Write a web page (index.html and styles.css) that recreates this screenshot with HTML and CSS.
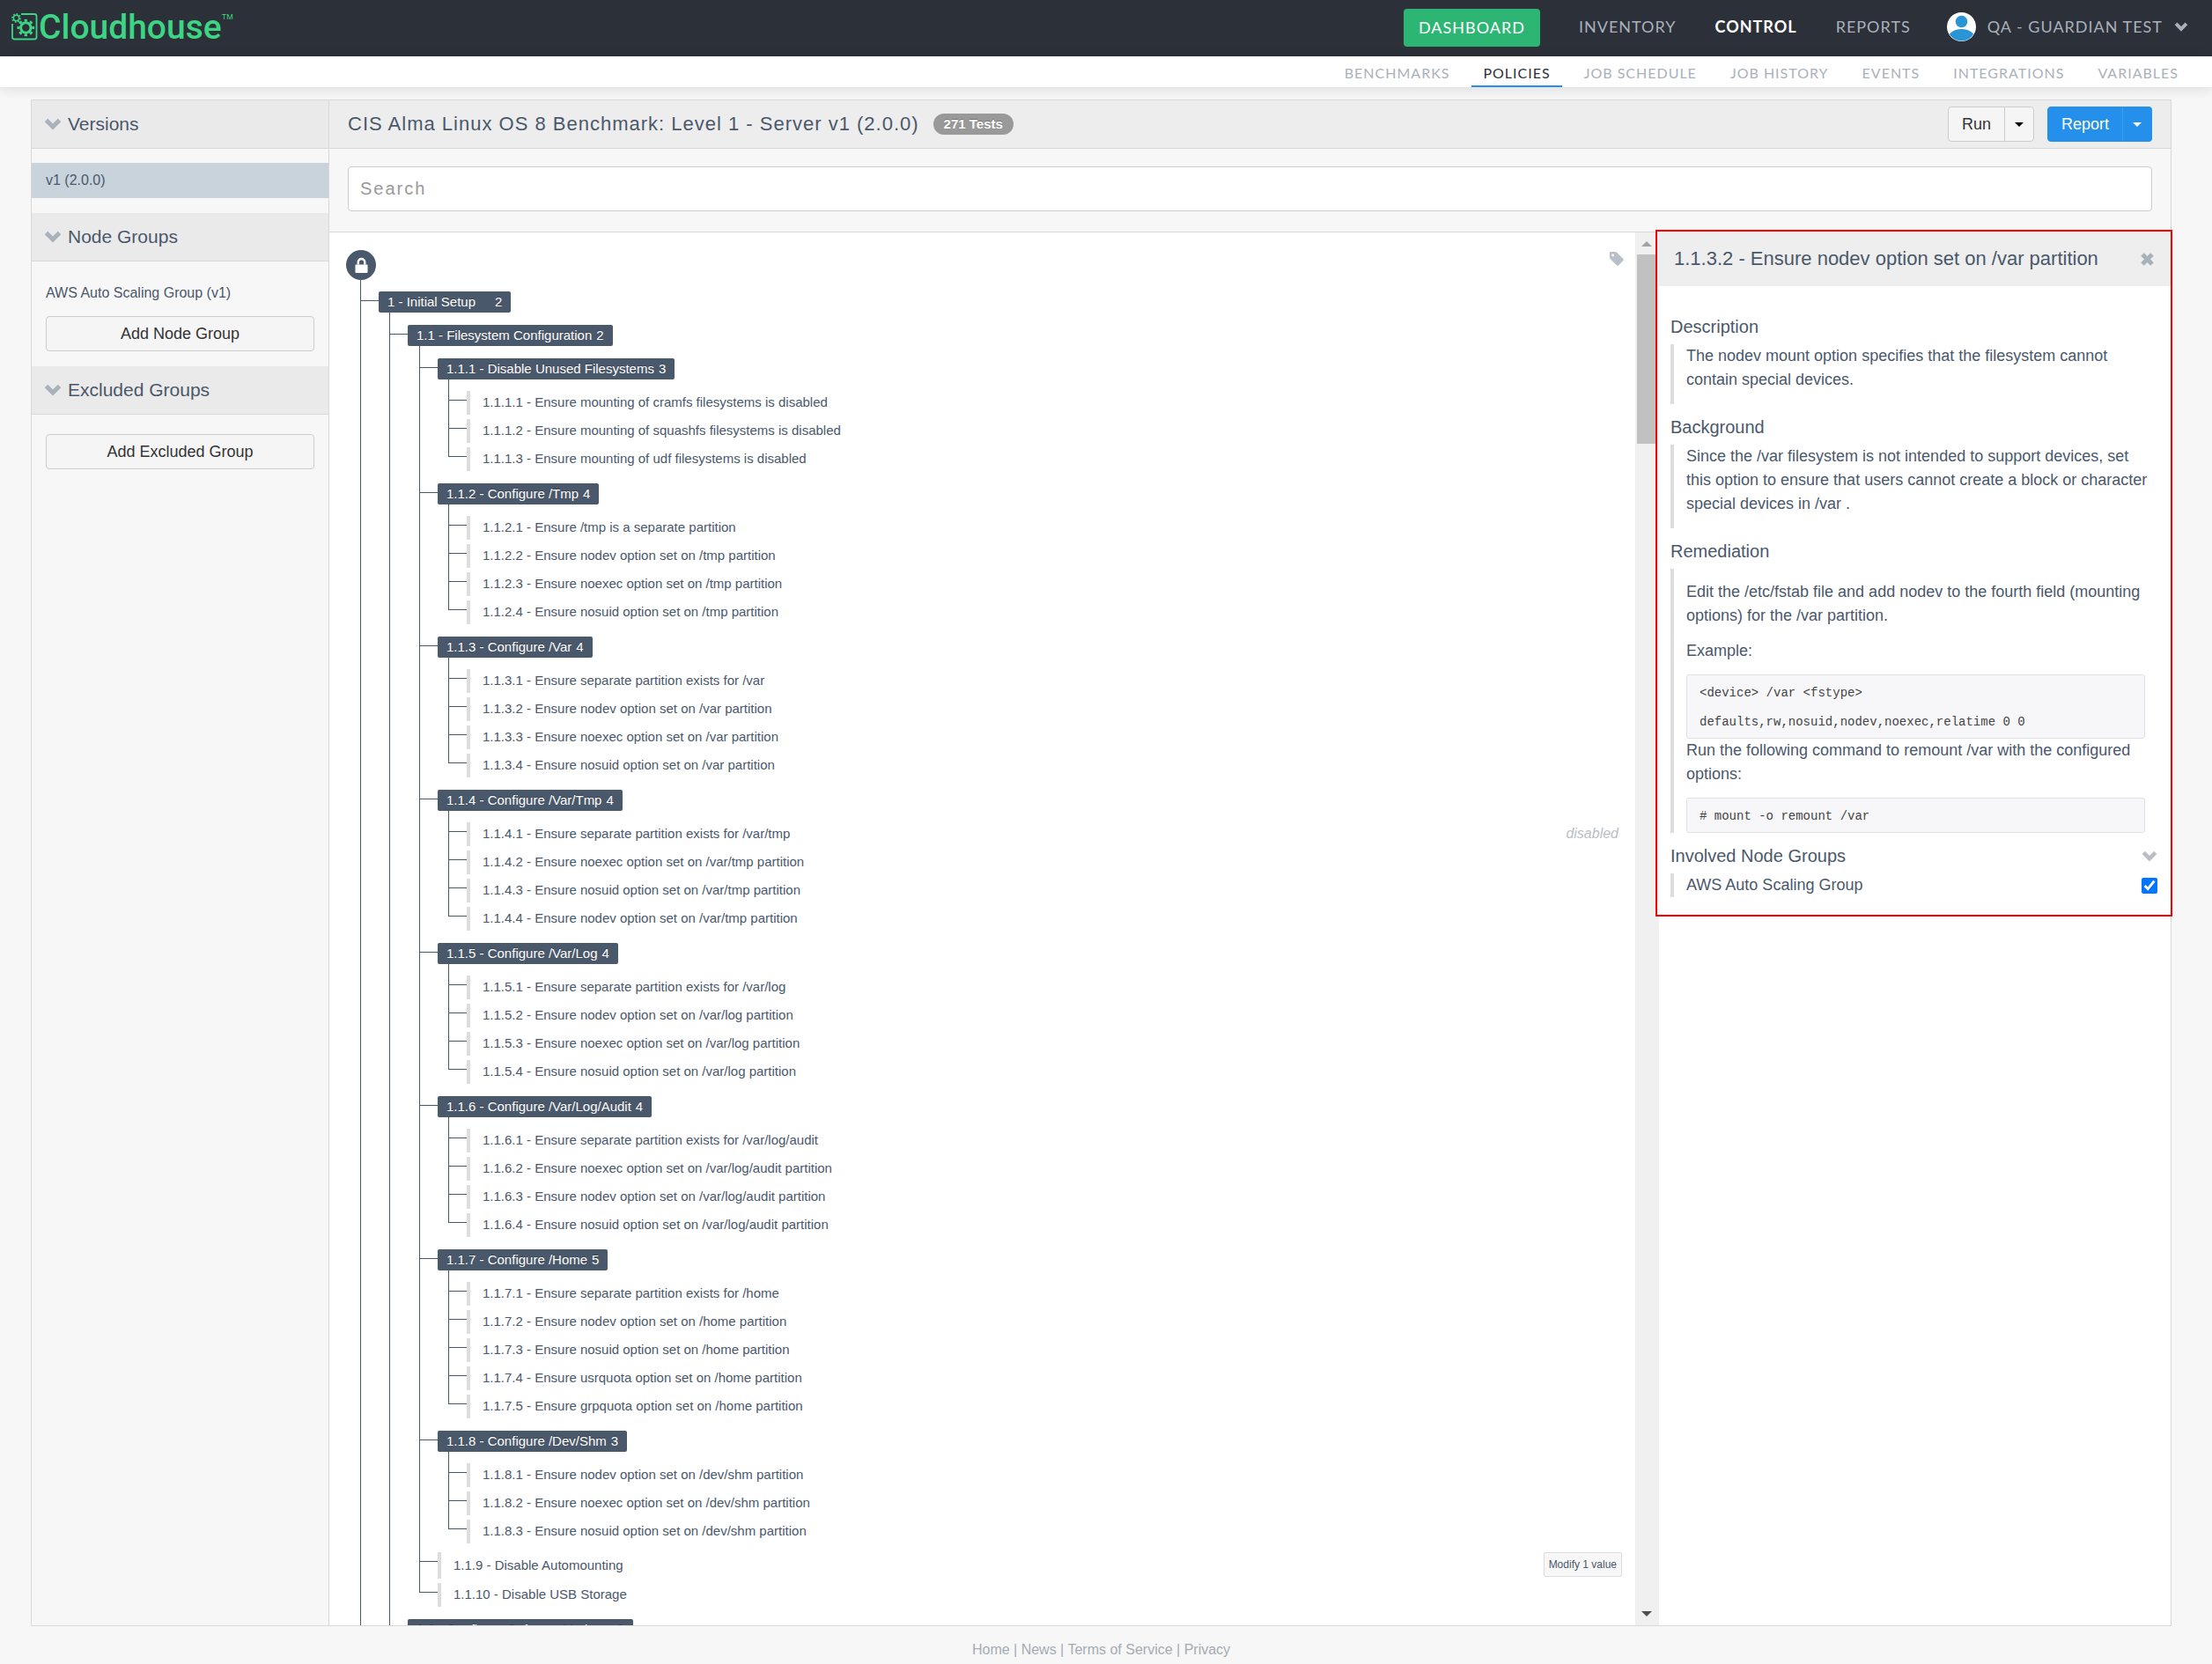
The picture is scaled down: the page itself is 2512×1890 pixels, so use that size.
FILE: index.html
```html
<!DOCTYPE html>
<html lang="en">
<head>
<meta charset="utf-8">
<title>Cloudhouse - Policies</title>
<meta name="viewport" content="width=device-width, initial-scale=1">
<link rel="stylesheet" href="styles.css">
</head>
<body>
<svg class="sprite" aria-hidden="true">
  <symbol id="chevron" viewBox="0 0 20 14"><path d="M2.5 2.5 10 10l7.500-7.500" fill="none" stroke="currentColor" stroke-width="5"/></symbol>
</svg>

<header class="topbar">
  <a class="logo" href="#">
    <svg class="logo-mark" viewBox="0 0 32 32" aria-hidden="true">
      <path d="M12 2h15a2.500 2.500 0 0 1 2.500 2.500v23.500a2.500 2.500 0 0 1-2.500 2.500H4.500a2.500 2.500 0 0 1-2.500-2.500V13" fill="none" stroke="currentColor" stroke-width="1.800"/>
      <circle cx="6.500" cy="6.500" r="3.200" fill="none" stroke="currentColor" stroke-width="1.500"/>
      <circle cx="6.500" cy="6.500" r="4.600" fill="none" stroke="currentColor" stroke-width="1.600" pathLength="16" stroke-dasharray="1 1"/>
      <circle cx="17.300" cy="17.500" r="5.700" fill="none" stroke="currentColor" stroke-width="3"/>
      <circle cx="17.300" cy="17.500" r="8.300" fill="none" stroke="currentColor" stroke-width="3" pathLength="16" stroke-dasharray="1 1" stroke-dashoffset="0.500"/>
    </svg>
    <span class="logo-name">Cloudhouse</span><span class="logo-tm">TM</span>
  </a>
  <nav class="mainnav">
    <a class="dashboard" href="#">DASHBOARD</a>
    <a href="#">INVENTORY</a>
    <a class="current" href="#">CONTROL</a>
    <a href="#">REPORTS</a>
    <button class="account" type="button">
      <svg class="avatar" viewBox="0 0 33 33" aria-hidden="true">
        <defs><clipPath id="disc"><circle cx="16.500" cy="16.500" r="16"/></clipPath></defs>
        <circle cx="16.500" cy="16.500" r="16.500" fill="#fff"/>
        <circle cx="16.500" cy="10.500" r="6.800" fill="#2a95d5"/>
        <ellipse cx="16.500" cy="30" rx="15.500" ry="11" fill="#2a95d5" clip-path="url(#disc)"/>
      </svg>
      <span>QA - GUARDIAN TEST</span>
      <svg class="account-arrow" aria-hidden="true"><use href="#chevron"/></svg>
    </button>
  </nav>
</header>
<nav class="subnav">
  <a href="#">BENCHMARKS</a>
  <a class="current" href="#">POLICIES</a>
  <a href="#">JOB SCHEDULE</a>
  <a href="#">JOB HISTORY</a>
  <a href="#">EVENTS</a>
  <a href="#">INTEGRATIONS</a>
  <a href="#">VARIABLES</a>
</nav>

<main class="frame">
  <aside class="sidebar">
    <h2><svg class="fold" aria-hidden="true"><use href="#chevron"/></svg>Versions</h2>
    <div class="side-body">
      <a class="side-item selected" href="#">v1 (2.0.0)</a>
    </div>
    <h2><svg class="fold" aria-hidden="true"><use href="#chevron"/></svg>Node Groups</h2>
    <div class="side-body">
      <a class="side-item" href="#">AWS Auto Scaling Group (v1)</a>
      <button class="btn side-btn" type="button">Add Node Group</button>
    </div>
    <h2><svg class="fold" aria-hidden="true"><use href="#chevron"/></svg>Excluded Groups</h2>
    <div class="side-body">
      <button class="btn side-btn" type="button">Add Excluded Group</button>
    </div>
  </aside>

  <section class="policy">
    <div class="policy-head">
      <h1>CIS Alma Linux OS 8 Benchmark: Level 1 - Server v1 (2.0.0)</h1>
      <span class="badge">271 Tests</span>
      <div class="split">
        <button class="btn" type="button">Run</button>
        <button class="btn caret" type="button" aria-label="Run options"></button>
      </div>
      <div class="split primary">
        <button class="btn" type="button">Report</button>
        <button class="btn caret" type="button" aria-label="Report options"></button>
      </div>
    </div>
    <form class="search">
      <input type="text" placeholder="Search" aria-label="Search">
    </form>

    <div class="work">
      <div class="tree-pane">
        <div class="tree-top">
          <span class="lock">
            <svg viewBox="0 0 16 20" aria-hidden="true"><path d="M4 9V6a4 4 0 0 1 8 0v3" fill="none" stroke="#fff" stroke-width="2.600"/><rect x="0.500" y="9" width="15" height="10" rx="1" fill="#fff"/></svg>
          </span>
          <svg class="tag" viewBox="0 0 16 16" aria-hidden="true"><path fill-rule="evenodd" d="M1 0h5.500a2 2 0 0 1 1.400.6l7.500 7.400a1.200 1.200 0 0 1 0 1.700L10 15.500a1.200 1.200 0 0 1-1.700 0L.6 8A2 2 0 0 1 0 6.600V1a1 1 0 0 1 1-1zm2.700 2.200a1.500 1.500 0 1 0 0 3 1.500 1.500 0 0 0 0-3z" fill="currentColor"/></svg>
        </div>
        <ul class="tree">
          <li class="branch">
            <span class="node"><span class="node-name">1 - Initial Setup</span>2</span>
            <ul>
              <li class="branch">
                <span class="node"><span class="node-name">1.1 - Filesystem Configuration</span>2</span>
                <ul>
                  <li class="branch">
                    <span class="node"><span class="node-name">1.1.1 - Disable Unused Filesystems</span>3</span>
                    <ul>
                      <li class="leaf"><div class="test">1.1.1.1 - Ensure mounting of cramfs filesystems is disabled</div></li>
                      <li class="leaf"><div class="test">1.1.1.2 - Ensure mounting of squashfs filesystems is disabled</div></li>
                      <li class="leaf"><div class="test">1.1.1.3 - Ensure mounting of udf filesystems is disabled</div></li>
                    </ul>
                  </li>
                  <li class="branch">
                    <span class="node"><span class="node-name">1.1.2 - Configure /Tmp</span>4</span>
                    <ul>
                      <li class="leaf"><div class="test">1.1.2.1 - Ensure /tmp is a separate partition</div></li>
                      <li class="leaf"><div class="test">1.1.2.2 - Ensure nodev option set on /tmp partition</div></li>
                      <li class="leaf"><div class="test">1.1.2.3 - Ensure noexec option set on /tmp partition</div></li>
                      <li class="leaf"><div class="test">1.1.2.4 - Ensure nosuid option set on /tmp partition</div></li>
                    </ul>
                  </li>
                  <li class="branch">
                    <span class="node"><span class="node-name">1.1.3 - Configure /Var</span>4</span>
                    <ul>
                      <li class="leaf"><div class="test">1.1.3.1 - Ensure separate partition exists for /var</div></li>
                      <li class="leaf"><div class="test">1.1.3.2 - Ensure nodev option set on /var partition</div></li>
                      <li class="leaf"><div class="test">1.1.3.3 - Ensure noexec option set on /var partition</div></li>
                      <li class="leaf"><div class="test">1.1.3.4 - Ensure nosuid option set on /var partition</div></li>
                    </ul>
                  </li>
                  <li class="branch">
                    <span class="node"><span class="node-name">1.1.4 - Configure /Var/Tmp</span>4</span>
                    <ul>
                      <li class="leaf"><div class="test">1.1.4.1 - Ensure separate partition exists for /var/tmp <em class="state">disabled</em></div></li>
                      <li class="leaf"><div class="test">1.1.4.2 - Ensure noexec option set on /var/tmp partition</div></li>
                      <li class="leaf"><div class="test">1.1.4.3 - Ensure nosuid option set on /var/tmp partition</div></li>
                      <li class="leaf"><div class="test">1.1.4.4 - Ensure nodev option set on /var/tmp partition</div></li>
                    </ul>
                  </li>
                  <li class="branch">
                    <span class="node"><span class="node-name">1.1.5 - Configure /Var/Log</span>4</span>
                    <ul>
                      <li class="leaf"><div class="test">1.1.5.1 - Ensure separate partition exists for /var/log</div></li>
                      <li class="leaf"><div class="test">1.1.5.2 - Ensure nodev option set on /var/log partition</div></li>
                      <li class="leaf"><div class="test">1.1.5.3 - Ensure noexec option set on /var/log partition</div></li>
                      <li class="leaf"><div class="test">1.1.5.4 - Ensure nosuid option set on /var/log partition</div></li>
                    </ul>
                  </li>
                  <li class="branch">
                    <span class="node"><span class="node-name">1.1.6 - Configure /Var/Log/Audit</span>4</span>
                    <ul>
                      <li class="leaf"><div class="test">1.1.6.1 - Ensure separate partition exists for /var/log/audit</div></li>
                      <li class="leaf"><div class="test">1.1.6.2 - Ensure noexec option set on /var/log/audit partition</div></li>
                      <li class="leaf"><div class="test">1.1.6.3 - Ensure nodev option set on /var/log/audit partition</div></li>
                      <li class="leaf"><div class="test">1.1.6.4 - Ensure nosuid option set on /var/log/audit partition</div></li>
                    </ul>
                  </li>
                  <li class="branch">
                    <span class="node"><span class="node-name">1.1.7 - Configure /Home</span>5</span>
                    <ul>
                      <li class="leaf"><div class="test">1.1.7.1 - Ensure separate partition exists for /home</div></li>
                      <li class="leaf"><div class="test">1.1.7.2 - Ensure nodev option set on /home partition</div></li>
                      <li class="leaf"><div class="test">1.1.7.3 - Ensure nosuid option set on /home partition</div></li>
                      <li class="leaf"><div class="test">1.1.7.4 - Ensure usrquota option set on /home partition</div></li>
                      <li class="leaf"><div class="test">1.1.7.5 - Ensure grpquota option set on /home partition</div></li>
                    </ul>
                  </li>
                  <li class="branch">
                    <span class="node"><span class="node-name">1.1.8 - Configure /Dev/Shm</span>3</span>
                    <ul>
                      <li class="leaf"><div class="test">1.1.8.1 - Ensure nodev option set on /dev/shm partition</div></li>
                      <li class="leaf"><div class="test">1.1.8.2 - Ensure noexec option set on /dev/shm partition</div></li>
                      <li class="leaf"><div class="test">1.1.8.3 - Ensure nosuid option set on /dev/shm partition</div></li>
                    </ul>
                  </li>
                  <li class="leaf"><div class="test">1.1.9 - Disable Automounting <button class="modify" type="button">Modify 1 value</button></div></li>
                  <li class="leaf"><div class="test">1.1.10 - Disable USB Storage</div></li>
                </ul>
              </li>
              <li class="branch">
                <span class="node"><span class="node-name">1.2 - Configure Software Updates</span>3</span>
              </li>
            </ul>
          </li>
        </ul>
      </div>
      <div class="scrollbar" aria-hidden="true">
        <span class="arrow up"></span>
        <span class="thumb"></span>
        <span class="arrow down"></span>
      </div>
      <div class="side-pane">
        <article class="detail">
          <header class="detail-head">
            <h2>1.1.3.2 - Ensure nodev option set on /var partition</h2>
            <button class="close" type="button" aria-label="Close">
              <svg viewBox="0 0 15 15" aria-hidden="true"><path d="M2 2l11 11M13 2 2 13" stroke="currentColor" stroke-width="5"/></svg>
            </button>
          </header>
          <div class="detail-body">
            <h3>Description</h3>
            <div class="quote padded"><p>The nodev mount option specifies that the filesystem cannot contain special devices.</p></div>
            <h3>Background</h3>
            <div class="quote padded"><p>Since the /var filesystem is not intended to support devices, set this option to ensure that users cannot create a block or character special devices in /var .</p></div>
            <h3>Remediation</h3>
            <div class="quote fix">
              <p>Edit the /etc/fstab file and add nodev to the fourth field (mounting options) for the /var partition.</p>
              <p>Example:</p>
              <pre>&lt;device&gt; /var &lt;fstype&gt;
defaults,rw,nosuid,nodev,noexec,relatime 0 0</pre>
              <p>Run the following command to remount /var with the configured options:</p>
              <pre># mount -o remount /var</pre>
            </div>
            <h3>Involved Node Groups <svg class="fold-right" aria-hidden="true"><use href="#chevron"/></svg></h3>
            <div class="quote group">
              <label for="aws-group">AWS Auto Scaling Group</label>
              <input id="aws-group" type="checkbox" checked>
            </div>
          </div>
        </article>
      </div>
    </div>
  </section>
</main>

<footer class="footer">
  <a href="#">Home</a> | <a href="#">News</a> | <a href="#">Terms of Service</a> | <a href="#">Privacy</a>
</footer>
</body>
</html>
```
FILE: styles.css
```css
* { box-sizing: border-box; }

:root {
  --ink: #4a586b;
  --muted: #a9b1bb;
  --line: #d8d8d8;
}

body {
  margin: 0;
  height: 100vh;
  display: flex;
  flex-direction: column;
  background: #f7f7f7;
  color: var(--ink);
  font-family: "Liberation Sans", Arial, sans-serif;
  font-size: 16px;
}

a { color: inherit; text-decoration: none; }
button, input { font-family: inherit; }
h1, h2, h3, p, ul, pre { margin: 0; font-weight: 400; }
ul { list-style: none; padding: 0; }
svg { display: block; flex: none; }
.sprite { position: absolute; width: 0; height: 0; }

/* Top bar */
.topbar {
  flex: none;
  height: 64px;
  display: flex;
  justify-content: space-between;
  background: #2c3038;
}
.logo {
  display: flex;
  align-items: flex-start;
  padding: 14px 0 0 12px;
  color: #3dd584;
}
.logo-mark { width: 32px; height: 32px; }
.logo-name {
  font-family: Roboto, sans-serif;
  font-weight: 500;
  font-size: 39px;
  line-height: 34px;
}
.logo-tm { font-size: 9px; line-height: 10px; }

.mainnav {
  display: flex;
  align-items: center;
  gap: 44px;
  padding: 0 27px 4px 0;
  color: var(--muted);
  font-family: Lato, sans-serif;
  font-size: 18px;
  letter-spacing: 1px;
}
.mainnav .current { color: #fff; font-weight: 700; }
.dashboard {
  margin-top: 3px;
  padding: 0 17px;
  line-height: 43px;
  border-radius: 4px;
  background: #2db673;
  color: #fff;
}
.account {
  display: flex;
  align-items: center;
  gap: 13px;
  margin-left: -3px;
  padding: 0;
  border: 0;
  background: none;
  color: inherit;
  font: inherit;
  letter-spacing: inherit;
}
.avatar { width: 33px; height: 33px; }
.account-arrow { width: 16px; height: 11px; }

.subnav {
  flex: none;
  height: 35px;
  display: flex;
  justify-content: flex-end;
  gap: 12px;
  padding-right: 25px;
  background: #fff;
  box-shadow: 0 2px 14px rgba(0, 0, 0, 0.12);
  color: var(--muted);
  font-family: Lato, sans-serif;
  font-size: 16px;
  letter-spacing: 1px;
  line-height: 38px;
}
.subnav a { height: 35px; padding: 0 13px; }
.subnav .current { color: #2c3038; border-bottom: 2px solid #2590eb; }

/* Framed page */
.frame {
  flex: 1;
  min-height: 0;
  display: flex;
  margin: 14px 46px 0 35px;
  border: 1px solid var(--line);
  position: relative;
  background: #f7f7f7;
}

.sidebar {
  flex: none;
  width: 338px;
  border-right: 1px solid var(--line);
}
.sidebar h2 {
  display: flex;
  align-items: center;
  gap: 7px;
  height: 55px;
  padding-left: 14px;
  border-bottom: 1px solid var(--line);
  background: #eaeaea;
  font-size: 21px;
}
.fold { width: 20px; height: 14px; color: var(--muted); }
.side-body { padding: 16px 0 17px; }
.side-item { display: block; padding: 0 16px; line-height: 40px; }
.selected { background: #c8d3dc; }

.btn {
  height: 40px;
  padding: 0 15px;
  border: 1px solid #ccc;
  border-radius: 4px;
  background: #f5f5f5;
  color: #333;
  font-size: 18px;
}
.side-btn { display: block; width: 305px; margin: 6px 16px 0; }

.policy {
  flex: 1;
  min-width: 0;
  display: flex;
  flex-direction: column;
}
.policy-head {
  flex: none;
  display: flex;
  align-items: center;
  height: 55px;
  padding: 0 21px;
  border-bottom: 1px solid var(--line);
  background: #ededed;
}
.policy-head h1 { font-size: 22px; letter-spacing: 1px; }
.badge {
  margin: 0 auto 0 16px;
  padding: 0 12px;
  border-radius: 12px;
  background: #999;
  color: #fff;
  font-size: 15px;
  font-weight: 700;
  line-height: 24px;
  text-shadow: 0 -1px 0 rgba(0, 0, 0, 0.25);
}
.split { display: flex; margin-left: 15px; }
.split .btn:first-child { border-radius: 4px 0 0 4px; }
.split .caret {
  width: 34px;
  margin-left: -1px;
  padding: 0;
  border-radius: 0 4px 4px 0;
  display: flex;
  align-items: center;
  justify-content: center;
}
.caret::before {
  content: "";
  border: 5px solid transparent;
  border-top-color: #000;
  border-bottom: 0;
}
.primary .btn { background: #2590eb; border-color: #2590eb; color: #fff; }
.primary .caret { border-left-color: #3d9eee; }
.primary .caret::before { border-top-color: #fff; }

.search {
  flex: none;
  padding: 20px 21px 23px;
  border-bottom: 1px solid var(--line);
}
.search input {
  display: block;
  width: 100%;
  height: 51px;
  padding: 0 13px;
  border: 1px solid #ccc;
  border-radius: 4px;
  background: #fff;
  color: var(--ink);
  font-size: 20px;
  letter-spacing: 2px;
}
.search input::placeholder { color: #999; opacity: 1; }

.work {
  flex: 1;
  min-height: 0;
  display: flex;
  background: #fff;
}

/* Test tree */
.tree-pane {
  flex: 1;
  min-width: 0;
  overflow: hidden;
  padding: 20px 13px 0 19px;
}
.tree-top {
  display: flex;
  justify-content: space-between;
  align-items: flex-start;
}
.lock {
  display: flex;
  align-items: center;
  justify-content: center;
  width: 34px;
  height: 34px;
  border-radius: 50%;
  background: var(--ink);
}
.lock svg { width: 15px; height: 19px; }
.tag { width: 16px; height: 16px; margin-top: 2px; color: #b8bfc8; }

.tree { padding-left: 37px; font-size: 15px; }
.tree ul { padding-left: 33px; }
.tree ul ul { padding-left: 34px; }
.tree ul ul ul { padding-left: 33px; }
.tree li { --gap: 5px; position: relative; padding-top: var(--gap); }
.tree .branch { --gap: 14px; }
.tree > .branch { --gap: 13px; }
.tree .leaf:first-child { --gap: 13px; }
.tree .branch + .leaf { --gap: 10px; }

/* Connectors: a vertical rail and a stub to each entry */
.tree li::before {
  content: "";
  position: absolute;
  top: calc(var(--gap) + 10px);
  left: -21px;
  width: 21px;
  height: 1px;
  background: var(--ink);
}
.tree li::after {
  content: "";
  position: absolute;
  top: 0;
  bottom: 0;
  left: -21px;
  width: 1px;
  background: var(--ink);
}
.tree ul > li:last-child::after { bottom: auto; height: calc(var(--gap) + 10px); }

.node {
  display: flex;
  gap: 5px;
  width: max-content;
  padding: 0 10px;
  border-radius: 2px;
  background: var(--ink);
  color: #fff;
  line-height: 24px;
  text-shadow: 0 -1px 0 rgba(0, 0, 0, 0.25);
}
.node-name { min-width: 117px; }

.test {
  display: flex;
  align-items: center;
  justify-content: space-between;
  min-height: 27px;
  padding: 0 2px 2px 14px;
  border-left: 4px solid #ddd;
}
.state { padding-right: 4px; color: #b8bfc8; font-size: 16px; }
.modify {
  height: 28px;
  padding: 0 5px;
  border: 1px solid #ddd;
  border-radius: 2px;
  background: #f7f7f8;
  color: var(--ink);
  font-size: 12px;
}

/* Drawn scrollbar */
.scrollbar {
  flex: none;
  width: 25px;
  display: flex;
  flex-direction: column;
  padding: 10px 0 10px 2px;
  background: #f0f0f0;
}
.arrow { width: 0; margin-left: 5px; border: 6px solid transparent; }
.up { border-top: 0; border-bottom-color: #a3a3a3; }
.down { margin-top: auto; border-bottom: 0; border-top-color: #505050; }
.thumb { height: 215px; margin-top: 9px; background: #c1c1c1; }

/* Detail panel */
.side-pane { flex: none; width: 583px; border-left: 2px solid #f0f0f0; }
.detail {
  position: relative;
  margin: -1px 0 0 -2px;
  outline: 2px solid #f00;
}
.detail-head {
  display: flex;
  align-items: center;
  justify-content: space-between;
  height: 62px;
  padding: 0 19px;
  background: #eee;
}
.detail-head h2 { font-size: 22px; }
.close { padding: 0; border: 0; background: none; color: var(--muted); }
.close svg { width: 15px; height: 15px; }
.detail-body { padding: 20px 15px; }
.detail-body h3 {
  display: flex;
  align-items: center;
  justify-content: space-between;
  margin: 12px 0 6px;
  font-size: 20px;
  line-height: 28px;
}
.fold-right { width: 18px; height: 13px; color: #b8bfc8; }
.quote {
  padding: 0 4px 0 14px;
  border-left: 4px solid #ddd;
  font-size: 18px;
  line-height: 27px;
}
.padded { padding-bottom: 14px; }
.fix { padding-top: 13px; }
.fix p + p, .fix p + pre { margin-top: 13px; }
.quote pre {
  margin-right: 10px;
  padding: 4px 14px 1px;
  border: 1px solid #dfe0e6;
  border-radius: 3px;
  background: #f7f7f9;
  color: #444;
  font-family: "Liberation Mono", monospace;
  font-size: 14px;
  line-height: 33px;
}
.group {
  display: flex;
  align-items: center;
  justify-content: space-between;
  padding-right: 0;
}
.group input { width: 18px; height: 18px; margin: 0; }

.footer {
  flex: none;
  height: 43px;
  padding: 8px 11px 0 0;
  color: #a3abb5;
  line-height: 38px;
  text-align: center;
}
```
